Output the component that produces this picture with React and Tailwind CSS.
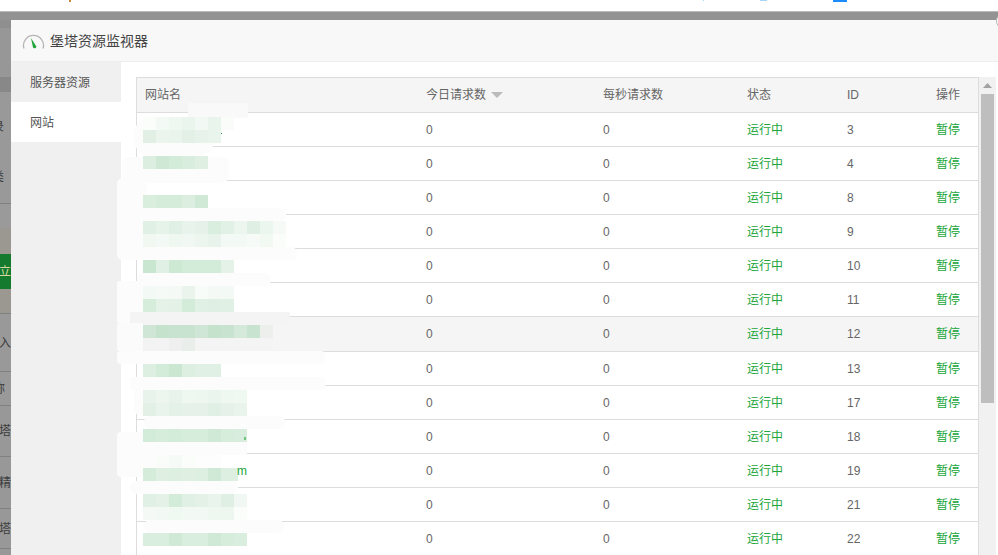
import React from "react";

const FONT = "[font-family:'Liberation_Sans','Noto_Sans_CJK_SC',sans-serif]";

// Sites (names are blurred out in the screenshot)
const sites = [3, 4, 8, 9, 10, 11, 12, 13, 17, 18, 19, 21, 22];

// Backdrop sliver to the left of the modal
const backdrop = [
	{ h: 8, bg: "bg-[#8f8f8f]" },
	{ h: 49, bg: "bg-[#979797]" },
	{ h: 15, bg: "bg-[#888888]" },
	{ h: 111, bg: "bg-[#999999]", parts: [{ text: "录" }, { text: "类" }] },
	{ h: 25, bg: "bg-[#9a9a9a]", line: true },
	{ h: 26, bg: "bg-[#9a9890]" },
	{ h: 35, bg: "bg-[#137a2e]", text: "立", color: "text-[#d8d8a0]", shift: "pr-0" },
	{ h: 24, bg: "bg-[#9a9890]" },
	{ h: 58, bg: "bg-[#999999]", text: "入", line: true, shift: "pr-0" },
	{ h: 34, bg: "bg-[#999999]", text: "称", line: true, shift: "pr-[6px]" },
	{ h: 51, bg: "bg-[#989898]", text: "塔", line: true, shift: "pr-0" },
	{ h: 52, bg: "bg-[#989898]", text: "精", line: true, shift: "pr-0" },
	{ h: 40, bg: "bg-[#989898]", text: "塔", line: true, shift: "pr-0" },
	{ h: 7, bg: "bg-[#989898]", line: true },
];

// White smears painted over the site names
const smears = [
	[188, 103, 60, 15, "#f9f9f9", "2px"],
	[133, 117, 82, 40, "#fcfcfc", "20px"],
	[122, 157, 107, 26, "#fcfcfc", "8px"],
	[117, 178, 30, 82, "#fcfcfc", "6px"],
	[130, 208, 156, 13, "#fcfcfc", "6px"],
	[117, 247, 180, 13, "#fcfcfc", "6px"],
	[137, 273, 134, 13, "#fcfcfc", "6px"],
	[117, 281, 26, 42, "#fcfcfc", "2px"],
	[130, 312, 160, 13, "#f4f4f4", "2px"],
	[117, 323, 26, 28, "#fbfbfb", "2px"],
	[117, 351, 208, 13, "#fcfcfc", "4px"],
	[130, 377, 195, 13, "#fcfcfc", "4px"],
	[134, 390, 10, 24, "#fcfcfc", "4px"],
	[144, 416, 141, 13, "#fcfcfc", "6px"],
	[117, 432, 26, 45, "#fcfcfc", "4px"],
	[143, 442, 104, 13, "#fcfcfc", "2px"],
	[130, 481, 108, 13, "#fcfcfc", "8px"],
	[144, 520, 140, 13, "#fcfcfc", "6px"],
];

// Mosaic rows: top, then the colour of each 13px block starting at x=143
const mosaic = [
	[117, ["#fbfdfb", "#f3f9f4", "#eef7f0", "#eaf5ed", "#f2f8f3", "#e9f4ec", "#f9fcf9"]],
	[130, ["#e2efe5", "#ebf5ed", "#e9f4ec", "#e2f0e6", "#e7f3ea", "#e9f4ec"]],
	[156, ["#dceee0", "#cfe8d5", "#d3ebd9", "#d9edde", "#dff0e3"]],
	[195, ["#d9eedd", "#d5ecdb", "#d5ecdb", "#dbeee0", "#cfe9d6"]],
	[221, ["#e1f0e5", "#e6f3e9", "#e0f0e4", "#e8f4eb", "#e6f2e9", "#d9eedf", "#e2f1e6", "#ecf6ee", "#dfefe3", "#ebf6ee", "#f5faf6"]],
	[234, ["#f1f8f2", "#f3f9f4", "#eff7f1", "#f1f8f3", "#ecf6ef", "#e8f4eb", "#f3f9f4", "#f3f9f4", "#f6fbf7", "#f2f9f3", "#fafdfa"]],
	[260, ["#c9e7d0", "#e0f0e4", "#cde9d4", "#d3ebd9", "#d3ebd9", "#d3ebd9", "#e5f2e8"]],
	[286, ["#f3f9f4", "#f5faf6", "#f4f9f5", "#eaf4ed", "#f8fcf9", "#f4f9f5", "#f3f9f4"]],
	[299, ["#d6eddc", "#e4f2e8", "#e3f1e6", "#d3ebd9", "#e0f0e4", "#dfefe3", "#e1f0e5"]],
	[325, ["#cfe5d5", "#c5e2cc", "#c8e3cf", "#c8e3cf", "#cfe5d5", "#c5e2cc", "#c8e3cf", "#d5e9da", "#c8e3cf", "#ecefec"]],
	[338, ["#f2f3f2", "#f2f3f2", "#eeefee", "#eaeeeb", "#f4f4f4", "#f4f4f4", "#f4f4f4", "#f4f4f4", "#f4f4f4", "#f4f4f4"]],
	[364, ["#dcefe1", "#d3ebd9", "#cbe7d2", "#dcefe1", "#e0f0e4", "#e0f0e4"]],
	[390, ["#e8f4eb", "#ecf6ee", "#e8f4eb", "#eff7f1", "#eef6f0", "#eaf5ed", "#eef7f0", "#f0f8f2"]],
	[403, ["#e2f0e6", "#e9f4ec", "#e3f1e7", "#e6f2e9", "#e6f2e9", "#e0f0e4", "#e6f2e9", "#e9f4ec"]],
	[429, ["#d3ebd9", "#d6eddc", "#d3ebd9", "#d6eddc", "#d6eddc", "#cfe9d6", "#d6eddc", "#d9edde"]],
	[455, ["#fcfcfc", "#f9fcf9", "#f5faf6", "#fafdfa", "#fcfdfc", "#fcfdfc"]],
	[468, ["#d5ecdb", "#dff0e3", "#dcefe1", "#dff0e3", "#dcefe1", "#d0e9d7", "#dcefe1"]],
	[494, ["#e0f0e4", "#e3f1e7", "#d3ebd9", "#e0f0e4", "#e3f1e7", "#e9f4ec", "#dfefe3", "#f1f8f3"]],
	[507, ["#f4f9f5", "#f2f8f3", "#f0f8f2", "#f2f8f3", "#f2f8f3", "#eef7f0", "#eef6f0", "#fbfdfb"]],
	[533, ["#d9eedf", "#d9eedf", "#cfe9d6", "#d9eedf", "#d9eedf", "#cfe9d6", "#d6eddc", "#d9eedf"]],
];

function GaugeIcon() {
	return (
		<svg width="23" height="16" viewBox="0 0 23 16" className="mr-[5px] shrink-0">
			<path d="M2 15.5 A10 10 0 1 1 21 15.5" fill="none" stroke="#b5b5b5" strokeWidth="1.3" />
			<path d="M9 5 L14.2 13.2 A1.8 1.8 0 0 1 11 14.6 Z" fill="#20a53a" />
		</svg>
	);
}

function SortArrow() {
	return (
		<svg width="12" height="6" viewBox="0 0 12 6" className="ml-[5px]">
			<path d="M0 0 H12 L6 6 Z" fill="#bbbbbb" />
		</svg>
	);
}

function Backdrop() {
	return (
		<div className="w-[11px] shrink-0 flex flex-col overflow-hidden">
			{backdrop.map((b, i) => (
				<div
					key={i}
					style={{ height: b.h }}
					className={`${b.bg} ${b.line ? "border-t border-[#808080]" : ""} flex ${b.parts ? "flex-col justify-start" : "items-center justify-end"} shrink-0 overflow-hidden text-xs ${b.color || "text-[#3c3c3c]"}`}
				>
					{b.parts ? (
						b.parts.map((p) => (
							<div key={p.text} className="h-[50px] flex items-center justify-end pr-[7px] pt-[20px]">
								<span className="whitespace-nowrap">{p.text}</span>
							</div>
						))
					) : b.text ? (
						<div className={`flex justify-end w-full ${b.shift}`}>
							<span className="whitespace-nowrap shrink-0">{b.text}</span>
						</div>
					) : null}
				</div>
			))}
		</div>
	);
}

function SiteTable() {
	return (
		<div className="w-[843px] shrink-0 border-x border-t border-[#ddd]">
			<table className="w-full table-fixed border-separate border-spacing-0 text-xs text-[#666]">
				<colgroup>
					<col className="w-[281px]" />
					<col className="w-[177px]" />
					<col className="w-[144px]" />
					<col className="w-[100px]" />
					<col className="w-[89px]" />
					<col />
				</colgroup>
				<thead>
					<tr className="bg-[#f5f5f5]">
						<th className="h-[35px] px-2 font-normal text-left border-b border-[#ddd]">网站名</th>
						<th className="h-[35px] px-2 font-normal text-left border-b border-[#ddd]">
							<span className="flex items-center">
								今日请求数
								<SortArrow />
							</span>
						</th>
						<th className="h-[35px] px-2 font-normal text-left border-b border-[#ddd]">每秒请求数</th>
						<th className="h-[35px] px-2 font-normal text-left border-b border-[#ddd]">状态</th>
						<th className="h-[35px] px-2 font-normal text-left border-b border-[#ddd]">ID</th>
						<th className="h-[35px] px-2 font-normal text-left border-b border-[#ddd]">操作</th>
					</tr>
				</thead>
				<tbody>
					{sites.map((id) => {
						const hovered = id === 12;
						const cell = `${hovered ? "h-[35px]" : "h-[34px]"} px-2 border-b border-[#ddd]`;
						return (
							<tr key={id} className={hovered ? "bg-[#f5f5f5]" : ""}>
								<td className={cell}></td>
								<td className={cell}>0</td>
								<td className={cell}>0</td>
								<td className={`${cell} text-[#20a53a]`}>运行中</td>
								<td className={cell}>{id}</td>
								<td className={`${cell} text-[#20a53a]`}>暂停</td>
							</tr>
						);
					})}
				</tbody>
			</table>
		</div>
	);
}

function Scrollbar() {
	return (
		<div className="w-[17px] shrink-0 bg-[#f1f1f1] flex flex-col items-center">
			<div className="h-[17px] flex items-center justify-center">
				<svg width="9" height="5" viewBox="0 0 9 5">
					<path d="M0 5 L4.5 0 L9 5 Z" fill="#a3a3a3" />
				</svg>
			</div>
			<div className="w-[13px] h-[309px] bg-[#bebebe]" />
		</div>
	);
}

// Blur patches that hide the site names, painted over the table
function Redaction() {
	return (
		<div className="absolute inset-0 pointer-events-none overflow-hidden">
			{smears.map(([left, top, width, height, background, borderRadius], i) => (
				<div key={i} className="absolute" style={{ left, top, width, height, background, borderRadius }} />
			))}
			{mosaic.map(([top, cells]) => (
				<div key={top} className="absolute left-[143px] flex" style={{ top }}>
					{cells.map((c, i) => (
						<div key={i} className="w-[13px] h-[13px]" style={{ background: c }} />
					))}
				</div>
			))}
			<div className="absolute left-[221px] top-[133px] w-px h-px bg-[#20a53a]" />
			<div className="absolute left-[244px] top-[437px] w-[2px] h-[3px] bg-[#6cc47f]" />
			<div className="absolute left-[234px] top-[468px] w-[4px] h-[13px] bg-[#dcefe1]" />
			<span className="absolute left-[237px] top-[463px] text-xs leading-4 text-[#20a53a]">m</span>
		</div>
	);
}

export default function App() {
	return (
		<div className={`relative w-[998px] h-[555px] overflow-hidden bg-white ${FONT}`}>
			{/* page behind the modal */}
			<div className="h-[11px] relative">
				<div className="absolute left-[69px] top-0 w-[2px] h-[2px] bg-[#c98a3a]" />
				<div className="absolute left-[703px] top-0 w-[1px] h-[1px] bg-[#a8d4f5]" />
				<div className="absolute left-[760px] top-0 w-[7px] h-[1px] bg-[#a8d4f5]" />
				<div className="absolute left-[833px] top-0 w-[14px] h-[2px] bg-[#1a8cff]" />
			</div>
			<div className="h-[9px] bg-[#939393] border-t border-[#bbbbbb]" />

			<div className="flex h-[535px]">
				<Backdrop />

				<div className="flex-1 min-w-0 flex flex-col bg-white">
					<div className="h-[42px] shrink-0 flex items-center pl-[11px] bg-[#f8f8f8] border-b border-[#eee] text-sm text-[#444]">
						<GaugeIcon />
						<span>堡塔资源监视器</span>
					</div>

					<div className="flex flex-1 min-h-0">
						<div className="w-[110px] shrink-0 bg-[#f0f0f0] text-xs text-[#555]">
							<div className="h-10 flex items-center pl-[19px] pt-[2px]">服务器资源</div>
							<div className="h-10 flex items-center pl-[19px] pt-[2px] bg-white">网站</div>
						</div>
						<div className="flex-1 min-w-0 flex items-stretch pt-[15px] pl-[15px] overflow-hidden">
							<SiteTable />
							<Scrollbar />
						</div>
					</div>
				</div>
			</div>

			<Redaction />

			{/* close button poking in from the corner */}
			<div className="absolute left-[996px] top-[13px] w-[16px] h-[16px] rounded-full bg-white border border-[#b5b5b5]" />
		</div>
	);
}
